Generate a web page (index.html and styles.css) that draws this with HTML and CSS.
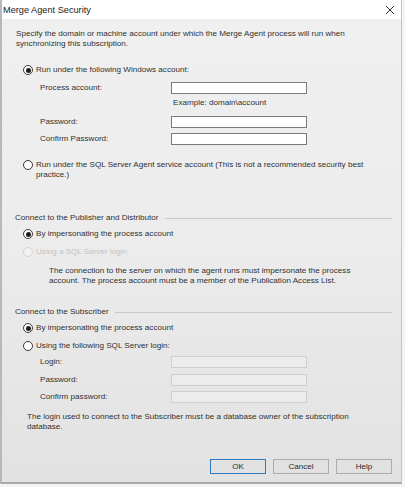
FILE: index.html
```html
<!DOCTYPE html>
<html>
<head>
<meta charset="utf-8">
<link rel="stylesheet" href="styles.css">
</head>
<body>
<div class="window">
  <div class="titlebar">
    <span class="title">Merge Agent Security</span>
    <svg class="close" width="10" height="10" viewBox="0 0 10 10"><path d="M1 1 L9 9 M9 1 L1 9" stroke="#333" stroke-width="1" fill="none"/></svg>
  </div>
  <div class="content">
    <p class="intro">Specify the domain or machine account under which the Merge Agent process will run when<br>synchronizing this subscription.</p>

    <div class="radio checked r-win"><span class="dot"></span><span>Run under the following Windows account:</span></div>
    <div class="field f1"><span class="label">Process account:</span><span class="input"></span></div>
    <div class="example">Example: domain\account</div>
    <div class="field f2"><span class="label">Password:</span><span class="input"></span></div>
    <div class="field f3"><span class="label">Confirm Password:</span><span class="input"></span></div>

    <div class="radio r-agent"><span class="dot"></span><span>Run under the SQL Server Agent service account (This is not a recommended security best<br>practice.)</span></div>

    <div class="heading h-pub"><span>Connect to the Publisher and Distributor</span><span class="rule"></span></div>
    <div class="radio checked r-imp1"><span class="dot"></span><span>By impersonating the process account</span></div>
    <div class="radio disabled r-sql1"><span class="dot"></span><span>Using a SQL Server login</span></div>
    <p class="note n-pub">The connection to the server on which the agent runs must impersonate the process<br>account. The process account must be a member of the Publication Access List.</p>

    <div class="heading h-sub"><span>Connect to the Subscriber</span><span class="rule"></span></div>
    <div class="radio checked r-imp2"><span class="dot"></span><span>By impersonating the process account</span></div>
    <div class="radio r-sql2"><span class="dot"></span><span>Using the following SQL Server login:</span></div>
    <div class="field f4"><span class="label">Login:</span><span class="input off"></span></div>
    <div class="field f5"><span class="label">Password:</span><span class="input off"></span></div>
    <div class="field f6"><span class="label">Confirm password:</span><span class="input off"></span></div>
    <p class="note n-sub">The login used to connect to the Subscriber must be a database owner of the subscription<br>database.</p>

    <div class="buttons">
      <button class="btn default">OK</button>
      <button class="btn">Cancel</button>
      <button class="btn">Help</button>
    </div>
  </div>
</div>
</body>
</html>
```

FILE: styles.css
```css
html, body {
  margin: 0;
  padding: 0;
  background: #f4f4f4;
}
body {
  width: 405px;
  height: 487px;
  overflow: hidden;
  font-family: "Liberation Sans", Arial, sans-serif;
  font-size: 8.1px;
  color: #303030;
}
.window {
  width: 399px;
  height: 482px;
  border-left: 2px solid #b8b8b8;
  border-right: 1px solid #c4c4c4;
  border-bottom: 2px solid #a9a9a9;
  background: linear-gradient(#f0f0f0 0, #ececec 50%, #e2e2e2 100%);
}
.titlebar {
  height: 19px;
  background: #ffffff;
  display: flex;
  align-items: center;
  justify-content: space-between;
  padding: 0 6px 0 1px;
}
.title {
  font-size: 9.2px;
  color: #222;
}
.close { display: block; }
.content {
  padding: 0 0 0 13px;
  line-height: 10px;
}
.intro {
  margin: 10px 0 0 1px;
}
.radio {
  display: flex;
  align-items: flex-start;
  gap: 3px;
  margin-left: 8px;
}
.dot {
  width: 8px;
  height: 8px;
  border: 1px solid #3a3a3a;
  border-radius: 50%;
  background: #fff;
  flex: none;
  position: relative;
}
.checked .dot::after {
  content: "";
  position: absolute;
  left: 1.5px; top: 1.5px;
  width: 5px; height: 5px;
  border-radius: 50%;
  background: #1e1e1e;
}
.disabled { color: #c2c2c2; }
.disabled .dot { border-color: #d2d2d2; background: #f2f2f2; }
.r-win { margin-top: 16px; }
.field {
  display: flex;
  align-items: center;
  height: 12px;
  padding-left: 25px;
}
.label { width: 131px; }
.input {
  width: 134px;
  height: 10px;
  border: 1px solid #7a7a7a;
  background: #fff;
}
.input.off {
  border-color: #cfcfcf;
  background: #ececec;
}
.f1 { margin-top: 7px; }
.example { margin: 4px 0 0 158px; }
.f2 { margin-top: 8px; }
.f3 { margin-top: 5px; }
.r-agent { margin-top: 15px; }
.heading {
  display: flex;
  align-items: center;
  gap: 6px;
  margin-top: 33px;
  margin-right: 9px;
}
.rule {
  flex: 1;
  height: 1px;
  background: #c8c8c8;
}
.h-sub { margin-top: 21px; }
.r-imp1 { margin-top: 6px; }
.r-sql1 { margin-top: 8px; }
.note { margin: 0; }
.n-pub { margin: 9px 0 0 34px; }
.r-imp2 { margin-top: 6px; }
.r-sql2 { margin-top: 8px; }
.f4 { margin-top: 5px; }
.f5 { margin-top: 6px; }
.f6 { margin-top: 5px; }
.n-sub { margin: 9px 0 0 12px; }
.buttons {
  display: flex;
  justify-content: flex-end;
  gap: 7px;
  margin: 27px 9px 0 0;
}
.btn {
  width: 56px;
  height: 15px;
  padding: 0;
  font-family: "Liberation Sans", Arial, sans-serif;
  font-size: 8.1px;
  color: #2a2a2a;
  background: #e1e1e1;
  border: 1px solid #adadad;
}
.btn.default {
  border: 1px solid #2f7cc4;
}
```
